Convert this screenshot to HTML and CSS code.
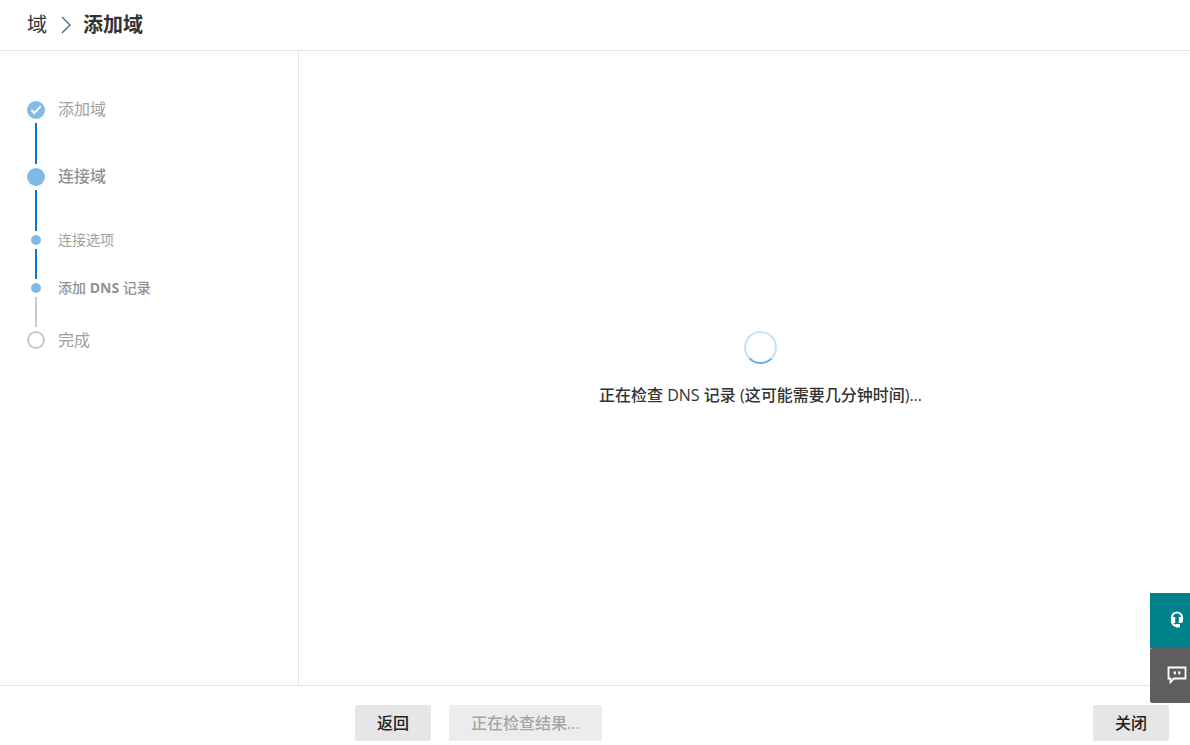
FILE: index.html
```html
<!DOCTYPE html>
<html lang="zh-CN">
<head>
    <meta charset="UTF-8">
    <meta name="viewport" content="width=device-width, initial-scale=1.0">
    <title>添加域</title>
    <link rel="stylesheet" href="styles.css">
</head>
<body>
    <header class="header">
        <nav class="breadcrumb">
            <a href="#">域</a>
            <svg class="chevron" width="10" height="18" viewBox="0 0 10 18" aria-hidden="true">
                <path d="M1 1l8 8-8 8" fill="none" stroke="#3f5f70" stroke-width="1.2"/>
            </svg>
            <h1>添加域</h1>
        </nav>
    </header>

    <div class="wizard">
        <aside class="sidebar">
            <ol class="steps">
                <li class="step done">
                    <span class="marker">
                        <svg width="18" height="18" viewBox="0 0 18 18" aria-hidden="true">
                            <circle cx="9" cy="9" r="9" fill="#7fbae8"/>
                            <path d="M4.3 9l3 3 6.4-6.6" fill="none" stroke="#fff" stroke-width="2"/>
                        </svg>
                    </span>
                    <span class="label">添加域</span>
                </li>
                <li class="step done current">
                    <span class="marker"><span class="dot"></span></span>
                    <span class="label">连接域</span>
                </li>
                <li class="step sub done">
                    <span class="marker"><span class="dot"></span></span>
                    <span class="label">连接选项</span>
                </li>
                <li class="step sub current">
                    <span class="marker"><span class="dot"></span></span>
                    <span class="label">添加 <b>DNS</b> 记录</span>
                </li>
                <li class="step last">
                    <span class="marker"><span class="dot empty"></span></span>
                    <span class="label">完成</span>
                </li>
            </ol>
        </aside>

        <main class="content">
            <div class="spinner"></div>
            <p class="status" role="status">正在检查 <span class="latin">DNS</span> 记录 <span class="latin">(</span>这可能需要几分钟时间<span class="latin">)...</span></p>
        </main>
    </div>

    <footer class="footer">
        <button type="button">返回</button>
        <button type="button" disabled>正在检查结果...</button>
        <button type="button" class="close">关闭</button>
    </footer>

    <div class="side-tabs">
        <button type="button" class="tab help" aria-label="帮助">
            <svg width="14" height="18" viewBox="0 0 14 18" aria-hidden="true">
                <path d="M2 9.5V6.5a5 5 0 0 1 10 0v3" fill="none" stroke="#fff" stroke-width="2.2"/>
                <path d="M1 6h4.2v6H3a2 2 0 0 1-2-2zM8.8 6H13v4a2 2 0 0 1-2 2H8.800z" fill="#fff"/>
                <path d="M2 9.500c0 3.300 2 5.300 5 5.300" fill="none" stroke="#fff" stroke-width="2"/>
                <rect x="5.500" y="13" width="4.500" height="3.500" rx="1" fill="#fff"/>
            </svg>
        </button>
        <button type="button" class="tab feedback" aria-label="反馈">
            <svg width="20" height="18" viewBox="0 0 20 18" aria-hidden="true">
                <path d="M1.500 1.500h17v11H7l-3.500 3.600v-3.600h-2z" fill="none" stroke="#fff" stroke-width="1.800"/>
                <path d="M6.500 5.500H9v2l-1 1.300H7l.5-1.300h-1zM11 5.500h2.500v2l-1 1.300h-1l.5-1.300h-1z" fill="#fff"/>
            </svg>
        </button>
    </div>
</body>
</html>
```
FILE: styles.css
```css
* {
    box-sizing: border-box;
}
body {
    margin: 0;
    min-height: 100vh;
    display: flex;
    flex-direction: column;
    font-family: "Open Sans", "Noto Sans CJK SC", sans-serif;
    font-size: 16px;
    line-height: 20px;
    color: #333;
    background: #fff;
}

/* header */
.header {
    padding: 10px 27px;
    border-bottom: 1px solid #e5e5e5;
}
.breadcrumb {
    display: flex;
    align-items: center;
    font-size: 20px;
    line-height: 30px;
}
.breadcrumb a {
    color: #333;
    text-decoration: none;
}
.chevron {
    margin: 0 12px 0 14px;
}
.breadcrumb h1 {
    margin: 0;
    font-size: 20px;
    font-weight: 700;
}

/* wizard */
.wizard {
    flex: 1;
    display: flex;
}
.sidebar {
    width: 299px;
    padding: 50px 27px;
    border-right: 1px solid #e5e5e5;
}
.steps {
    margin: 0;
    padding: 0;
    list-style: none;
}
.step {
    display: flex;
    gap: 13px;
    min-height: 67px;
    color: #a0a0a0;
}
.step.sub {
    min-height: 48px;
    font-size: 14px;
}
.label {
    line-height: 16px;
}
.sub .label {
    line-height: 10px;
}
.marker {
    width: 18px;
    display: flex;
    flex-direction: column;
    align-items: center;
}
.marker::after {
    content: "";
    flex: 1;
    width: 2px;
    margin: 4px 0;
    background: #c8c8c8;
}
.done .marker::after {
    background: #0078d4;
}
.last .marker::after {
    display: none;
}
.dot {
    width: 18px;
    height: 18px;
    border-radius: 50%;
    background: #7fbae8;
}
.sub .dot {
    width: 10px;
    height: 10px;
}
.dot.empty {
    background: #fff;
    border: 2px solid #c8c8c8;
}
.last .label {
    line-height: 18px;
}
.current .label {
    font-weight: 500;
    color: #929292;
}
.label b {
    font-weight: 700;
}

.content {
    flex: 1;
    display: flex;
    flex-direction: column;
    align-items: center;
    justify-content: center;
    padding-left: 32px;
}
.spinner {
    width: 33px;
    height: 33px;
    border: 2px solid #c7e0f4;
    border-bottom-color: #69afe5;
    border-radius: 50%;
}
.status {
    margin: 21px 0 0;
    font-weight: 500;
}
.latin {
    font-weight: 400;
}

/* footer */
.footer {
    display: flex;
    gap: 18px;
    padding: 19px 21px 4px 355px;
    border-top: 1px solid #e5e5e5;
}
.footer button {
    height: 36px;
    padding: 0 22px 2px;
    border: none;
    border-radius: 2px;
    background: #e6e6e6;
    color: #212121;
    font-family: inherit;
    font-size: 16px;
    font-weight: 500;
    cursor: pointer;
}
.footer button:disabled {
    background: #ececec;
    color: #a6a6a6;
    cursor: default;
}
.footer .close {
    margin-left: auto;
}

/* help and feedback tabs over the right edge */
.side-tabs {
    position: fixed;
    right: 0;
    bottom: 42px;
    display: flex;
    flex-direction: column;
}
.tab {
    display: flex;
    align-items: center;
    justify-content: flex-end;
    width: 40px;
    height: 55px;
    border: none;
    cursor: pointer;
}
.help {
    padding: 0 6px 2px 0;
    background: #00828b;
}
.feedback {
    padding: 0 3px 2px 0;
    border-radius: 2px 0 0 2px;
    background: #605e5c;
}
```
